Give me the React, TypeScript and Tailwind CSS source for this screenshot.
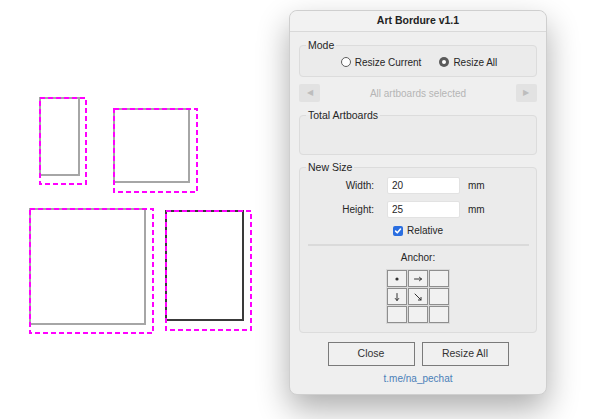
import React from 'react'

const font = { fontFamily: '"Liberation Sans", Arial, sans-serif' }

function Artboards() {
  return (
    <svg width="289" height="419" className="block">
      {/* grey artboards */}
      <rect x="40" y="98" width="39" height="77" fill="white" stroke="#a6a6a6" strokeWidth="2" />
      <rect x="114" y="109" width="75" height="73" fill="white" stroke="#a6a6a6" strokeWidth="2" />
      <rect x="30" y="209" width="115" height="115" fill="white" stroke="#a6a6a6" strokeWidth="2" />
      <rect x="166" y="211" width="77" height="109" fill="white" stroke="#3a3a3a" strokeWidth="2" />
      {/* resized bounds */}
      <g fill="none" stroke="#ff00ff" strokeWidth="2" strokeDasharray="5 3">
        <rect x="40" y="98" width="46" height="86" />
        <rect x="114" y="109" width="83" height="83" />
        <rect x="30" y="209" width="123" height="124" />
        <rect x="166" y="211" width="85" height="119" />
      </g>
    </svg>
  )
}

function Group({ label, className, children }: { label: string; className?: string; children?: React.ReactNode }) {
  return (
    <fieldset className={`rounded-[4px] border border-[#dcdcdc] bg-[#ebebeb] ${className ?? ''}`}>
      <legend className="ml-[6px] px-[2px] text-[10.5px] leading-[11px] text-[#262626]">{label}</legend>
      {children}
    </fieldset>
  )
}

function Radio({ checked, label }: { checked?: boolean; label: string }) {
  return (
    <label className="flex items-center gap-[4px]">
      {checked ? (
        <span className="flex h-[10px] w-[10px] items-center justify-center rounded-full bg-[#5a5a5a]">
          <span className="h-[4px] w-[4px] rounded-full bg-white" />
        </span>
      ) : (
        <span className="h-[10px] w-[10px] rounded-full border border-[#5e5e5e] bg-white" />
      )}
      <span>{label}</span>
    </label>
  )
}

function Field({ label, value }: { label: string; value: string }) {
  return (
    <div className="flex items-center">
      <span className="w-[67px] text-right">{label}</span>
      <div className="ml-[13px] flex h-[17px] w-[73px] items-center rounded-[2px] border border-[#e2e2e2] bg-white px-[4px]">
        {value}
      </div>
      <span className="ml-[8px]">mm</span>
    </div>
  )
}

// small anchor glyphs drawn in a 10x10 box
function AnchorGlyph({ kind }: { kind: string }) {
  if (!kind) return null
  return (
    <svg width="10" height="10" viewBox="0 0 10 10" fill="none" stroke="#333" strokeWidth="1" strokeLinecap="round">
      {kind === 'dot' && <circle cx="5" cy="5" r="1.6" fill="#333" stroke="none" />}
      {kind === 'right' && <path d="M1.5 5 H8.5 M6.5 3.3 L8.5 5 L6.5 6.7" />}
      {kind === 'down' && <path d="M5 1.5 V8.5 M3.3 6.5 L5 8.5 L6.7 6.5" />}
      {kind === 'diag' && <path d="M2 2 L8 8 M8 5.4 V8 H5.4" />}
    </svg>
  )
}

const anchors = ['dot', 'right', '', 'down', 'diag', '', '', '', '']

export default function App() {
  return (
    <div className="flex h-[419px] w-[600px] overflow-hidden bg-white" style={font}>
      <Artboards />

      <div className="mt-[10px] flex h-[385px] w-[258px] flex-col rounded-[8px] border border-[#cfcfcf] bg-[#efefef] text-[10px] text-[#262626] shadow-[0_14px_32px_rgba(0,0,0,0.32)]">
        <div className="flex h-[21px] shrink-0 items-center justify-center rounded-t-[8px] border-b border-[#d9d9d9] bg-[#f2f2f2] text-[10.5px] font-bold text-[#222]">
          Art Bordure v1.1
        </div>

        <div className="flex flex-col px-[9px] pt-[8px]">
          <Group label="Mode" className="h-[37px]">
            <div className="flex h-[22px] items-center justify-center gap-[18px] pl-[2px]">
              <Radio label="Resize Current" />
              <Radio checked label="Resize All" />
            </div>
          </Group>

          <div className="mt-[7px] flex h-[18px] items-center justify-between">
            <div className="flex h-[18px] w-[21px] items-center justify-center rounded-[2px] bg-[#e2e2e2] text-[8px] text-[#bdbdbd]">◀</div>
            <span className="text-[#b5b5b5]">All artboards selected</span>
            <div className="flex h-[18px] w-[21px] items-center justify-center rounded-[2px] bg-[#e2e2e2] text-[8px] text-[#bdbdbd]">▶</div>
          </div>

          <Group label="Total Artboards" className="mt-[8px] h-[45px]" />

          <Group label="New Size" className="mt-[7px] h-[171px]">
            <div className="flex flex-col pt-[4px]">
              <div className="flex flex-col gap-[7px] pl-[7px]">
                <Field label="Width:" value="20" />
                <Field label="Height:" value="25" />
              </div>
              <label className="mt-[5px] flex items-center justify-center gap-[4px]">
                <span className="flex h-[10px] w-[10px] items-center justify-center rounded-[2px] bg-[#2a6ee0]">
                  <svg width="8" height="8" viewBox="0 0 9 9">
                    <path d="M1.8 4.6 L3.7 6.5 L7.3 2.3" fill="none" stroke="white" strokeWidth="1.8" strokeLinecap="round" strokeLinejoin="round" />
                  </svg>
                </span>
                <span>Relative</span>
              </label>
              <div className="mx-auto mt-[6px] h-[2px] w-[221px] bg-[#dadada]" />
              <div className="mt-[4px] text-center">Anchor:</div>
              <div className="mx-auto mt-[4px] grid grid-cols-[repeat(3,20px)] gap-px bg-[#d9d9d9] p-px">
                {anchors.map((a, i) => (
                  <div key={i} className="flex h-[17px] items-center justify-center border border-[#8e8e8e] bg-[#f1f1f1]">
                    <AnchorGlyph kind={a} />
                  </div>
                ))}
              </div>
            </div>
          </Group>

          <div className="mt-[9px] flex justify-center gap-[7px]">
            <button className="h-[24px] w-[87px] border border-[#7a7a7a] bg-[#f0f0f0] text-[10.5px] text-[#333]">Close</button>
            <button className="h-[24px] w-[87px] border border-[#7a7a7a] bg-[#f0f0f0] text-[10.5px] text-[#333]">Resize All</button>
          </div>

          <div className="mt-[5px] text-center text-[#4b7fb8]">t.me/na_pechat</div>
        </div>
      </div>
    </div>
  )
}
